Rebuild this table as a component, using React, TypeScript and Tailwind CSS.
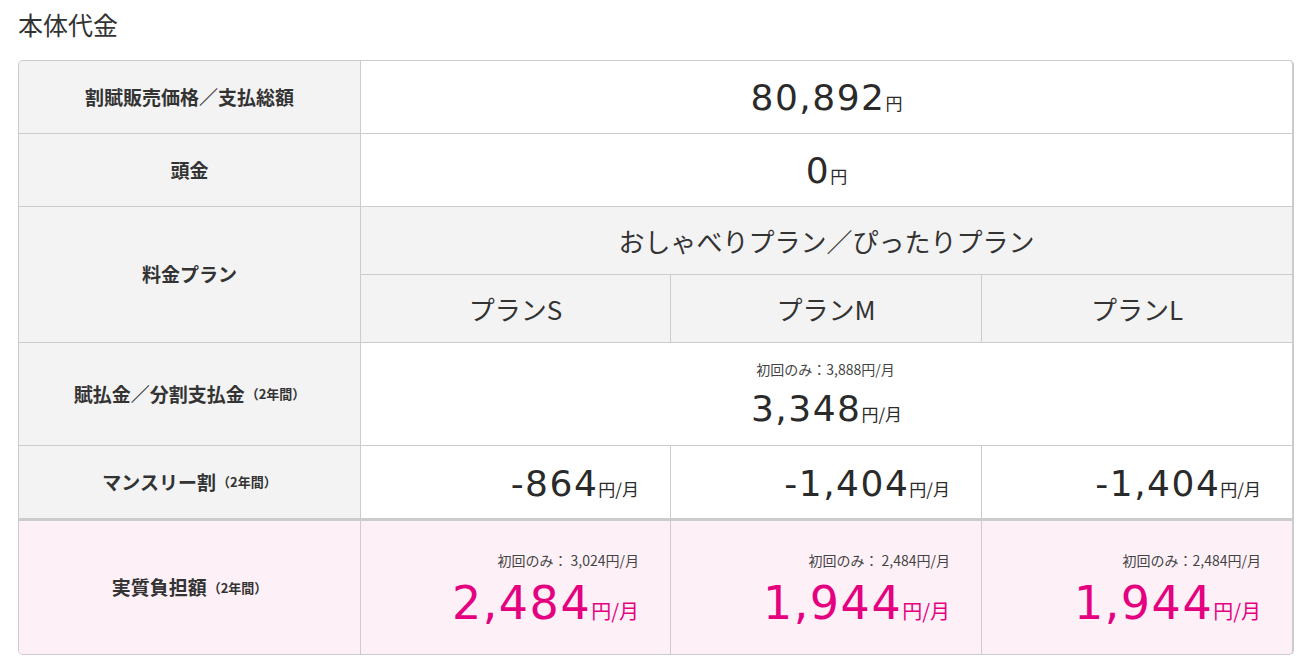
import React from "react";

const JP = { fontFamily: '"Noto Sans CJK JP", "Noto Sans", sans-serif' };
const NUM = { fontFamily: '"DejaVu Sans", "Noto Sans CJK JP", sans-serif' };

function Label({ main, sub }: { main: string; sub?: string }) {
  return (
    <div className="flex items-center justify-center text-[#333]" style={JP}>
      <span className="text-[19px] font-bold">{main}</span>
      {sub && <span className="text-[13px] font-bold ml-[1px]">{sub}</span>}
    </div>
  );
}

function Yen({ n, month, pink }: { n: string; month?: boolean; pink?: boolean }) {
  return (
    <span className={"inline-flex items-baseline " + (pink ? "text-[#e4007f]" : "text-[#2a2a2a]")}>
      <span
        className={pink ? "text-[46px] leading-[50px] tracking-[1.5px]" : "text-[36px] leading-[40px] tracking-[1.5px]"}
        style={NUM}
      >
        {n}
      </span>
      <span className={pink ? "text-[20px]" : "text-[17px]"} style={JP}>
        円{month ? "/月" : ""}
      </span>
    </span>
  );
}

export default function App() {
  return (
    <div className="bg-white w-[1308px] h-[669px] pt-[9px]" style={JP}>
      <h2 className="ml-[18px] text-[25px] leading-[30px] text-[#333] font-normal">本体代金</h2>
      <div className="ml-[18px] mt-[21px] w-[1276px] border border-r-2 border-[#ccc] rounded-[5px] overflow-hidden">
        <div className="grid grid-cols-[341px_309px_310px_310px] grid-rows-[72px_72px_67px_67px_102px_72px_1px_133px] gap-px bg-[#ccc]">
          {/* row 1 */}
          <div className="bg-[#f3f3f3] flex items-center justify-center">
            <Label main="割賦販売価格／支払総額" />
          </div>
          <div className="col-span-3 bg-white flex items-center justify-center pt-[2px]">
            <Yen n="80,892" />
          </div>
          {/* row 2 */}
          <div className="bg-[#f3f3f3] flex items-center justify-center">
            <Label main="頭金" />
          </div>
          <div className="col-span-3 bg-white flex items-center justify-center pt-[2px]">
            <Yen n="0" />
          </div>
          {/* row 3 */}
          <div className="row-span-2 bg-[#f3f3f3] flex items-center justify-center">
            <Label main="料金プラン" />
          </div>
          <div className="col-span-3 bg-[#f3f3f3] flex items-center justify-center text-[26px] text-[#333]">
            おしゃべりプラン／ぴったりプラン
          </div>
          <div className="bg-[#f3f3f3] flex items-center justify-center text-[26px] text-[#333]">プランS</div>
          <div className="bg-[#f3f3f3] flex items-center justify-center text-[26px] text-[#333]">プランM</div>
          <div className="bg-[#f3f3f3] flex items-center justify-center text-[26px] text-[#333]">プランL</div>
          {/* row 4 */}
          <div className="bg-[#f3f3f3] flex items-center justify-center">
            <Label main="賦払金／分割支払金" sub="（2年間）" />
          </div>
          <div className="col-span-3 bg-white flex flex-col items-center justify-center">
            <div className="text-[14px] leading-[20px] text-[#444] -ml-[2px]">初回のみ：3,888円/月</div>
            <div className="mt-[10px]">
              <Yen n="3,348" month />
            </div>
          </div>
          {/* row 5 */}
          <div className="bg-[#f3f3f3] flex items-center justify-center">
            <Label main="マンスリー割" sub="（2年間）" />
          </div>
          {["-864", "-1,404", "-1,404"].map((v, i) => (
            <div key={i} className="bg-white flex items-center justify-end pr-[31px] pt-[4px]">
              <Yen n={v} month />
            </div>
          ))}
          {/* spacer thick border */}
          <div className="col-span-4 bg-[#ccc]" />
          {/* row 6 */}
          <div className="bg-[#fef0f7] flex items-center justify-center">
            <Label main="実質負担額" sub="（2年間）" />
          </div>
          {[
            ["初回のみ： 3,024円/月", "2,484"],
            ["初回のみ： 2,484円/月", "1,944"],
            ["初回のみ：2,484円/月", "1,944"],
          ].map(([s, v], i) => (
            <div key={i} className="bg-[#fef0f7] flex flex-col items-end justify-center pr-[31px] pt-[2px]">
              <div className="text-[14px] leading-[20px] text-[#444]">{s}</div>
              <div className="mt-[8px]">
                <Yen n={v} month pink />
              </div>
            </div>
          ))}
        </div>
      </div>
    </div>
  );
}
